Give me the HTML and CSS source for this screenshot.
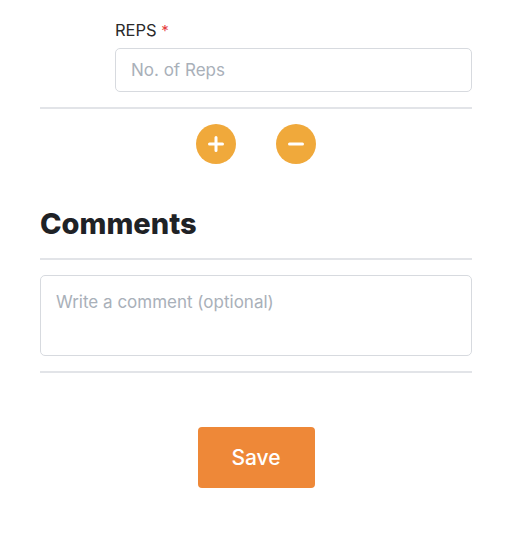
FILE: index.html
```html
<!DOCTYPE html>
<html>
<head>
<meta charset="utf-8">
<link rel="stylesheet" href="styles.css">
</head>
<body>
<div class="page">
  <div class="field">
    <label class="label">REPS <span class="req">*</span></label>
    <input class="input" type="text" placeholder="No. of Reps">
  </div>
  <hr class="divider first">
  <div class="actions">
    <button class="circle" aria-label="Add">
      <svg width="18" height="18" viewBox="0 0 18 18"><path d="M9 2.5v13M2.5 9h13" stroke="#fff" stroke-width="3" stroke-linecap="round"/></svg>
    </button>
    <button class="circle" aria-label="Remove">
      <svg width="18" height="18" viewBox="0 0 18 18"><path d="M2.5 9h13" stroke="#fff" stroke-width="3" stroke-linecap="round"/></svg>
    </button>
  </div>
  <h2 class="title">Comments</h2>
  <hr class="divider">
  <textarea class="textarea" placeholder="Write a comment (optional)"></textarea>
  <hr class="divider">
  <div class="save-row">
    <button class="save">Save</button>
  </div>
</div>
</body>
</html>
```
FILE: styles.css
```css
* { box-sizing: border-box; }
body {
  margin: 0;
  background: #fff;
  font-family: Inter, "Liberation Sans", Arial, sans-serif;
  color: #212529;
}
.page {
  width: 432px;
  margin-left: 40px;
  padding-top: 20px;
}
.field {
  margin-left: 75px;
  display: flex;
  flex-direction: column;
}
.label {
  display: block;
  height: 20px;
  font-size: 16.5px;
  line-height: 20px;
  color: #2a2a2a;
  margin-bottom: 8px;
}
.req { color: #e53e3e; font-size: 15px; line-height: 1; }
.input {
  height: 44px;
  border: 1px solid #d7dadf;
  border-radius: 5px;
  padding: 0 15px;
  font-size: 17px;
  font-family: inherit;
  color: #333;
}
.input::placeholder, .textarea::placeholder { color: #a9b0b9; }
.divider {
  border: 0;
  border-top: 2px solid #e2e4e8;
  margin: 0;
}
.first { margin-top: 15px; }
.actions {
  display: flex;
  justify-content: center;
  gap: 40px;
  margin-top: 15px;
}
.circle {
  width: 40px;
  height: 40px;
  border-radius: 50%;
  border: 0;
  background: #f0a93b;
  display: flex;
  align-items: center;
  justify-content: center;
  padding: 0;
}
.title {
  font-size: 29px;
  font-weight: 800;
  margin: 40px 0 14px;
  line-height: 40px;
  color: #1f2226;
}
.textarea {
  display: block;
  width: 100%;
  height: 81px;
  margin: 15px 0;
  border: 1px solid #d7dadf;
  border-radius: 5px;
  padding: 15px;
  resize: none;
  font-family: inherit;
  font-size: 17px;
  line-height: 22px;
}
.save-row {
  display: flex;
  justify-content: center;
  margin-top: 54px;
}
.save {
  width: 117px;
  height: 61px;
  background: #ee8838;
  color: #fff;
  border: 0;
  border-radius: 4px;
  font-family: inherit;
  font-size: 21px;
  font-weight: 500;
}
```
